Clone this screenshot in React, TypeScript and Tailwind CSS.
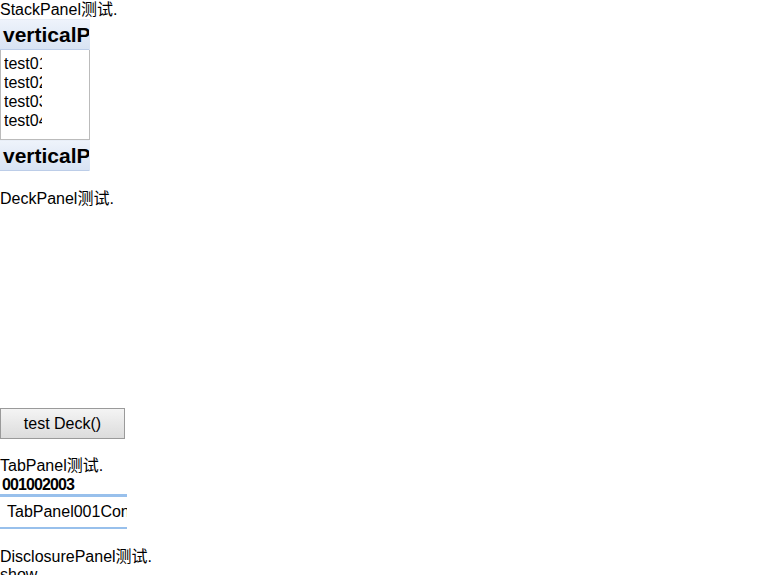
import React from 'react';

const font = { fontFamily: '"Liberation Sans", Arial, "Noto Sans CJK SC", sans-serif' };

const StackHeader: React.FC = () => (
  <div className="h-[31px] w-[89px] overflow-hidden whitespace-nowrap border-t border-b border-t-[#e8eef7] border-b-[#bccde8] bg-gradient-to-b from-[#eef3fb] to-[#d8e3f3] pl-[3px] text-[21px] font-bold leading-[29px] text-black">
    verticalPanel
  </div>
);

const App: React.FC = () => {
  const items = ['test01', 'test02', 'test03', 'test04'];

  return (
    <div className="min-h-screen bg-white text-[16px] leading-[18px] text-black" style={font}>
      <div className="h-[19px] pt-px">StackPanel测试.</div>

      <div className="w-[90px]">
        <div className="bg-gradient-to-b from-[#eef3fb] to-[#d8e3f3]">
          <StackHeader />
        </div>
        <div className="h-[90px] border border-[#bbbbbb] border-t-0 bg-white pl-[3px] pt-[4px]">
          {items.map(item => (
            <div key={item} className="h-[19px] w-[38px] overflow-hidden whitespace-nowrap leading-[19px]">
              {item}
            </div>
          ))}
        </div>
        <div className="bg-gradient-to-b from-[#eef3fb] to-[#d8e3f3]">
          <StackHeader />
        </div>
      </div>

      <div className="mt-[19px] h-[18px]">DeckPanel测试.</div>
      <div className="h-[200px]" />

      <button className="h-[31px] w-[125px] border border-[#9a9a9a] bg-gradient-to-b from-[#f4f4f4] to-[#dcdcdc] text-[16px] leading-[18px] text-black">
        test Deck()
      </button>

      <div className="mt-[18px] h-[18px]">TabPanel测试.</div>
      <div className="w-[127px]">
        <div className="h-[19px] overflow-hidden whitespace-nowrap pl-[2px] pt-[1px] text-[16px] font-bold leading-[18px] tracking-[-0.9px]">
          001002003
        </div>
        <div className="h-[35px] overflow-hidden whitespace-nowrap border-t-[3px] border-b-[2px] border-[#98c0ec] pl-[7px] pt-[5px] leading-[19px]">
          TabPanel001Content
        </div>
      </div>

      <div className="mt-[19px] h-[18px]">DisclosurePanel测试.</div>
      <div className="h-[18px]">show</div>
    </div>
  );
};

export default App;
